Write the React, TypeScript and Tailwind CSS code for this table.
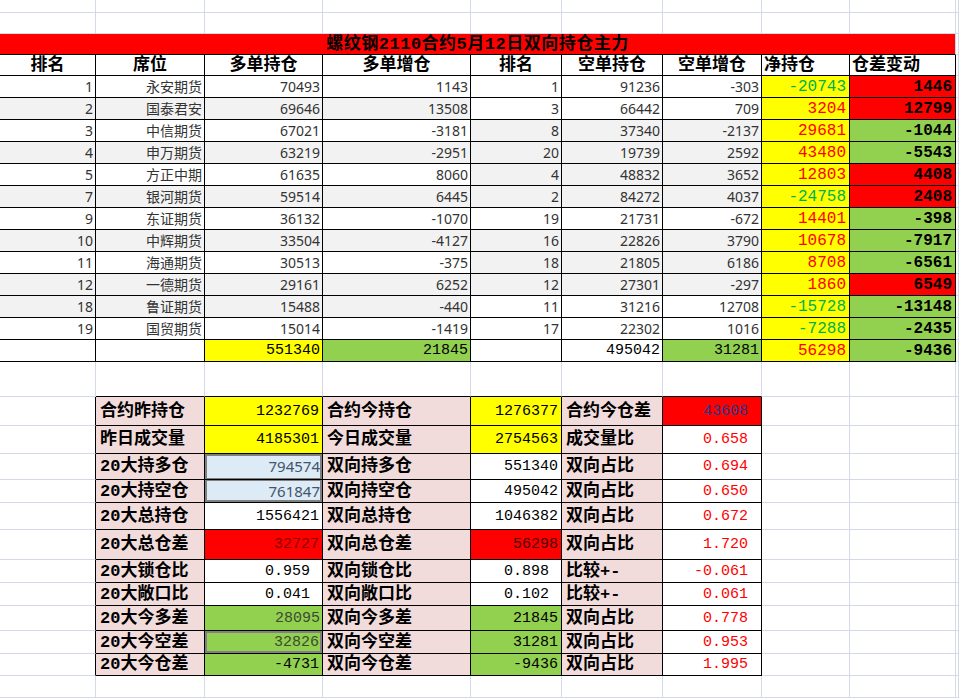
import React from 'react'

type Cell = { t?: string | number; k?: string; span?: number }

const SANS = "font-['Noto_Sans','Noto_Sans_CJK_SC',sans-serif] text-[14px] text-[#333333]"
const MONO = "font-['Liberation_Mono','Noto_Sans_CJK_SC',monospace]"
const HEAD = "font-['Liberation_Mono','Noto_Sans_CJK_SC',monospace] font-bold text-[17px] text-black"
const COLS = 'grid grid-cols-[96px_109px_118px_148px_91px_101px_99px_88px_106px_1fr]'

// sheet regions with black borders
const inTop = (r: number, c: number) => r >= 3 && r <= 16 && c >= 0 && c <= 8
const inBot = (r: number, c: number) => r >= 18 && r <= 28 && c >= 1 && c <= 6
const inT = (r: number, c: number) => inTop(r, c) || inBot(r, c)

const top: [number, string, number, number, number, number, number, number, number][] = [
  [1, '永安期货', 70493, 1143, 1, 91236, -303, -20743, 1446],
  [2, '国泰君安', 69646, 13508, 3, 66442, 709, 3204, 12799],
  [3, '中信期货', 67021, -3181, 8, 37340, -2137, 29681, -1044],
  [4, '申万期货', 63219, -2951, 20, 19739, 2592, 43480, -5543],
  [5, '方正中期', 61635, 8060, 4, 48832, 3652, 12803, 4408],
  [7, '银河期货', 59514, 6445, 2, 84272, 4037, -24758, 2408],
  [9, '东证期货', 36132, -1070, 19, 21731, -672, 14401, -398],
  [10, '中辉期货', 33504, -4127, 16, 22826, 3790, 10678, -7917],
  [11, '海通期货', 30513, -375, 18, 21805, 6186, 8708, -6561],
  [12, '一德期货', 29161, 6252, 12, 27301, -297, 1860, 6549],
  [18, '鲁证期货', 15488, -440, 11, 31216, 12708, -15728, -13148],
  [19, '国贸期货', 15014, -1419, 17, 22302, 1016, -7288, -2435],
]
const leftGray = [2, 4, 6, 8, 10, 11]
const rightGray = [3, 4, 5, 6, 8, 9, 10]

function dataRow(d: (typeof top)[number], i: number): Cell[] {
  const lg = leftGray.includes(i + 1) ? 'bg-[#f2f2f2]' : 'bg-white'
  const rg = rightGray.includes(i + 1) ? 'bg-[#f2f2f2]' : 'bg-white'
  const num = `justify-end pr-[2px] ${SANS}`
  const [rank, name, lp, lc, sr, sp, sc, net, diff] = d
  return [
    { t: rank, k: `${num} ${lg}` },
    { t: name, k: `${num} ${lg}` },
    { t: lp, k: `${num} ${lg}` },
    { t: lc, k: `${num} ${lg}` },
    { t: sr, k: `${num} ${rg}` },
    { t: sp, k: `${num} ${rg}` },
    { t: sc, k: `${num} ${rg}` },
    {
      t: net,
      k: `justify-end pr-[3px] ${MONO} text-[16px] bg-[#ffff00] ${net < 0 ? 'text-[#00b050]' : 'text-[#ff0000]'}`,
    },
    {
      t: diff,
      k: `justify-end pr-[3px] ${MONO} font-bold text-[16px] text-black ${diff < 0 ? 'bg-[#92d050]' : 'bg-[#ff0000]'}`,
    },
    {},
  ]
}

const H = `justify-center ${HEAD}`
const HL = `justify-start pl-[2px] ${HEAD}`
const TV = `justify-end pr-[2px] ${MONO} text-[15px] text-black`

const LBL = `justify-start pl-[4px] bg-[#f2dcdb] ${HEAD}`
const V = `justify-end pr-[3px] ${MONO} text-[15px] text-black`
const VP = `justify-end pr-[12px] ${MONO} text-[15px] text-black bg-white`
const R = `justify-end pr-[13px] ${MONO} text-[15px] text-[#ff0000] bg-white`
const BLUE = `justify-end pr-[2px] font-['Noto_Sans',sans-serif] text-[15px] text-[#44546a] bg-[#ddebf7]`

const bottom: Cell[][] = [
  [{ t: '合约昨持仓', k: LBL }, { t: 1232769, k: `${V} bg-[#ffff00]` }, { t: '合约今持仓', k: LBL }, { t: 1276377, k: `${V} bg-[#ffff00]` }, { t: '合约今仓差', k: LBL }, { t: 43608, k: `justify-end pr-[13px] ${MONO} text-[15px] text-[#203a8c] bg-[#ff0000]` }],
  [{ t: '昨日成交量', k: LBL }, { t: 4185301, k: `${V} bg-[#ffff00]` }, { t: '今日成交量', k: LBL }, { t: 2754563, k: `${V} bg-[#ffff00]` }, { t: '成交量比', k: LBL }, { t: '0.658', k: R }],
  [{ t: '20大持多仓', k: LBL }, { t: 794574, k: `${BLUE} shadow-[inset_2px_2px_0_#808080,inset_-2px_-1px_0_#808080]` }, { t: '双向持多仓', k: LBL }, { t: 551340, k: `${V} bg-white` }, { t: '双向占比', k: LBL }, { t: '0.694', k: R }],
  [{ t: '20大持空仓', k: LBL }, { t: 761847, k: `${BLUE} shadow-[inset_2px_1px_0_#808080,inset_-2px_-2px_0_#808080]` }, { t: '双向持空仓', k: LBL }, { t: 495042, k: `${V} bg-white` }, { t: '双向占比', k: LBL }, { t: '0.650', k: R }],
  [{ t: '20大总持仓', k: LBL }, { t: 1556421, k: `${V} bg-white` }, { t: '双向总持仓', k: LBL }, { t: 1046382, k: `${V} bg-white` }, { t: '双向占比', k: LBL }, { t: '0.672', k: R }],
  [{ t: '20大总仓差', k: LBL }, { t: 32727, k: `justify-end pr-[3px] ${MONO} text-[15px] text-[#8a0000] bg-[#ff0000]` }, { t: '双向总仓差', k: LBL }, { t: 56298, k: `justify-end pr-[3px] ${MONO} text-[15px] text-[#4a0000] bg-[#ff0000]` }, { t: '双向占比', k: LBL }, { t: '1.720', k: R }],
  [{ t: '20大锁仓比', k: LBL }, { t: '0.959', k: VP }, { t: '双向锁仓比', k: LBL }, { t: '0.898', k: VP }, { t: '比较+-', k: LBL }, { t: '-0.061', k: R }],
  [{ t: '20大敞口比', k: LBL }, { t: '0.041', k: VP }, { t: '双向敞口比', k: LBL }, { t: '0.102', k: VP }, { t: '比较+-', k: LBL }, { t: '0.061', k: R }],
  [{ t: '20大今多差', k: LBL }, { t: 28095, k: `justify-end pr-[2px] ${MONO} text-[15px] text-[#3d4a30] bg-[#92d050]` }, { t: '双向今多差', k: LBL }, { t: 21845, k: `${V} bg-[#92d050]` }, { t: '双向占比', k: LBL }, { t: '0.778', k: R }],
  [{ t: '20大今空差', k: LBL }, { t: 32826, k: `justify-end pr-[3px] ${MONO} text-[15px] text-[#3d4a30] bg-[#92d050] shadow-[inset_0_0_0_2px_#808080]` }, { t: '双向今空差', k: LBL }, { t: 31281, k: `${V} bg-[#92d050]` }, { t: '双向占比', k: LBL }, { t: '0.953', k: R }],
  [{ t: '20大今仓差', k: LBL }, { t: -4731, k: `${V} bg-[#92d050]` }, { t: '双向今仓差', k: LBL }, { t: -9436, k: `${V} bg-[#92d050]` }, { t: '双向占比', k: LBL }, { t: '1.995', k: R }],
]
const bottomHeights = ['h-[29px]', 'h-[28px]', 'h-[26px]', 'h-[23px]', 'h-[27px]', 'h-[30px]', 'h-[23px]', 'h-[23px]', 'h-[25px]', 'h-[23px]', 'h-[22px]']

const blank = (): Cell[] => Array.from({ length: 10 }, () => ({}))

const rows: { h: string; cells: Cell[] }[] = [
  { h: 'h-[13px]', cells: blank() },
  { h: 'h-[21px]', cells: blank() },
  {
    h: 'h-[21px]',
    cells: [
      { t: '螺纹钢2110合约5月12日双向持仓主力', span: 9, k: `col-span-9 justify-center bg-[#ff0000] tracking-[0.5px] ${HEAD}` },
      {},
    ],
  },
  {
    h: 'h-[21px]',
    cells: [
      { t: '排名', k: H }, { t: '席位', k: H }, { t: '多单持仓', k: H }, { t: '多单增仓', k: H },
      { t: '排名', k: H }, { t: '空单持仓', k: H }, { t: '空单增仓', k: H }, { t: '净持仓', k: HL },
      { t: '仓差变动', k: HL }, {},
    ],
  },
  ...top.map((d, i) => ({ h: 'h-[22px]', cells: dataRow(d, i) })),
  {
    h: 'h-[22px]',
    cells: [
      {}, {},
      { t: 551340, k: `${TV} bg-[#ffff00]` },
      { t: 21845, k: `${TV} bg-[#92d050]` },
      {},
      { t: 495042, k: TV },
      { t: 31281, k: `${TV} bg-[#92d050]` },
      { t: 56298, k: `justify-end pr-[3px] ${MONO} text-[16px] text-[#ff0000] bg-[#ffff00]` },
      { t: -9436, k: `justify-end pr-[3px] ${MONO} font-bold text-[16px] text-black bg-[#92d050]` },
      {},
    ],
  },
  { h: 'h-[35px]', cells: blank() },
  ...bottom.map((b, i) => ({ h: bottomHeights[i], cells: [{}, ...b, {}, {}, {}] })),
  { h: 'h-[22px]', cells: blank() },
  { h: 'h-[22px]', cells: blank() },
]

export default function App() {
  return (
    <div className="w-[959px] h-[698px] overflow-hidden bg-white">
      {rows.map((row, r) => {
        let col = 0
        return (
          <div key={r} className={`${COLS} ${row.h}`}>
            {row.cells.map((c, i) => {
              const start = col
              const end = col + (c.span ?? 1) - 1
              col = end + 1
              const right = inT(r, end) || inT(r, end + 1) ? 'border-r-black' : 'border-r-[#d3d9e6]'
              const bot = inT(r, start) || inT(r + 1, start) ? 'border-b-black' : 'border-b-[#d3d9e6]'
              return (
                <div
                  key={i}
                  className={`flex items-center overflow-hidden whitespace-nowrap leading-none border-r border-b ${right} ${bot} ${c.k ?? ''}`}
                >
                  {c.t}
                </div>
              )
            })}
          </div>
        )
      })}
    </div>
  )
}
